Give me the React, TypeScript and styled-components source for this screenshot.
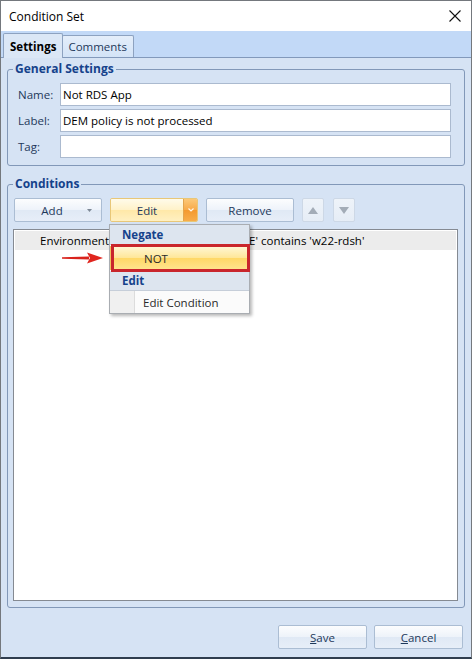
import React from 'react';
import styled, { createGlobalStyle, css } from 'styled-components';

const UI_FONT = `"Open Sans", "Noto Sans", "DejaVu Sans", sans-serif`;

const Global = createGlobalStyle`
  html, body { margin: 0; padding: 0; background: #ffffff; }
  body { font-family: ${UI_FONT}; }
  * { box-sizing: border-box; }
`;

const Window = styled.div`
  width: 472px;
  height: 659px;
  display: flex;
  flex-direction: column;
  border: 1px solid #74787d;
  border-bottom: 2px solid #2f3d4e;
  background: #ffffff;
  font-family: ${UI_FONT};
  font-size: 11.5px;
  color: #000;
  overflow: hidden;
`;

const TitleBar = styled.div`
  flex: none;
  height: 30px;
  display: flex;
  align-items: center;
  justify-content: space-between;
  padding: 0 10px 0 8px;
  background: #ffffff;
`;

const Title = styled.span`
  font-size: 12px;
  color: #000;
`;

const CloseButton = styled.button`
  width: 12px;
  height: 12px;
  padding: 0;
  border: none;
  background: transparent;
  display: flex;
`;

const TabStrip = styled.div`
  flex: none;
  height: 27px;
  display: flex;
  align-items: flex-end;
  padding-left: 2px;
  background: #c2d9f7;
  border-bottom: 1px solid #8299bb;
`;

const Tab = styled.div<{ $active?: boolean }>`
  display: flex;
  align-items: center;
  border: 1px solid #8da2c0;
  border-bottom: none;
  border-radius: 2px 2px 0 0;
  ${(p) =>
    p.$active
      ? css`
          height: 25px;
          padding: 0 6px;
          margin-bottom: -1px;
          background: #dbe7f6;
          font-weight: 700;
          color: #000;
        `
      : css`
          height: 22px;
          padding: 0 6px 0 5px;
          margin-left: -1px;
          background: linear-gradient(#e4eefa, #d3e3f7);
          color: #1e395b;
        `}
`;

const Panel = styled.div`
  flex: 1;
  min-height: 0;
  display: flex;
  flex-direction: column;
  padding: 3px 6px 0 6px;
  background: #d6e3f4;
`;

const Group = styled.fieldset<{ $grow?: boolean }>`
  margin: 0;
  min-width: 0;
  border: 1px solid #8298b8;
  border-radius: 3px;
  ${(p) =>
    p.$grow
      ? css`
          flex: 1;
          min-height: 0;
          display: flex;
          flex-direction: column;
          margin-top: 10px;
          padding: 6px 6px 6px 5px;
        `
      : css`
          padding: 6px 13px 7px 10px;
        `}
`;

const Legend = styled.legend<{ $shift: number }>`
  padding: 0 2px;
  margin-left: ${(p) => p.$shift}px;
  font-size: 12px;
  line-height: 16px;
  font-weight: 700;
  color: #15428b;
`;

const Fields = styled.div`
  display: flex;
  flex-direction: column;
  gap: 3px;
`;

const FieldRow = styled.div`
  display: flex;
  align-items: center;
  height: 23px;
`;

const FieldLabel = styled.label`
  flex: none;
  width: 42px;
  color: #1e395b;
`;

const TextInput = styled.input`
  flex: 1;
  min-width: 0;
  height: 23px;
  padding: 0 2px;
  border: 1px solid #abbacf;
  background: #ffffff;
  font: inherit;
  color: #000;
  outline: none;
`;

const ConditionsBody = styled.div`
  position: relative;
  flex: 1;
  min-height: 0;
  display: flex;
  flex-direction: column;
  gap: 7px;
`;

const Toolbar = styled.div`
  flex: none;
  display: flex;
  gap: 8px;
  padding-left: 1px;
`;

const buttonFace = css`
  height: 24px;
  border: 1px solid #abbdd3;
  border-radius: 2px;
  background: linear-gradient(#fcfdfe, #eef3fa 48%, #e0e9f5 52%, #e7eef8);
  color: #1e395b;
  font: inherit;
  padding: 0;
`;

const ToolButton = styled.button`
  ${buttonFace};
  width: 88px;
  display: flex;
  align-items: center;
  justify-content: center;
`;

const ButtonText = styled.span`
  flex: 1;
  text-align: center;
  padding-left: 2px;
`;

const Caret = styled.span`
  flex: none;
  width: 14px;
  display: flex;
  align-items: center;
  justify-content: flex-start;
`;

const SplitButton = styled.div`
  width: 88px;
  height: 24px;
  display: flex;
  border: 1px solid #e8c778;
  border-radius: 2px;
  overflow: hidden;
`;

const SplitMain = styled.button`
  flex: 1;
  border: none;
  padding: 0;
  background: linear-gradient(#fffbea, #fff2c9 48%, #ffe8a8 52%, #fff0c2);
  color: #1e395b;
  font: inherit;
`;

const SplitDrop = styled.button`
  flex: none;
  width: 14px;
  border: none;
  border-left: 1px solid #e3a54d;
  padding: 0;
  display: flex;
  align-items: center;
  justify-content: center;
  background: linear-gradient(#fcc877, #f8ab4b 48%, #f49a2f 52%, #f7ad4a);
`;

const ArrowButton = styled.button<{ $gapBefore?: number }>`
  width: 22px;
  height: 24px;
  padding: 0;
  border: 1px solid #cdd8e6;
  border-radius: 2px;
  background: linear-gradient(#eef3f9, #e6edf6);
  display: flex;
  align-items: center;
  justify-content: center;
  margin-left: ${(p) => p.$gapBefore ?? 0}px;
`;

const ListBox = styled.div`
  flex: 1;
  min-height: 0;
  border: 1px solid #858a92;
  background: #ffffff;
  padding: 1px;
`;

const ListRow = styled.div<{ $selected?: boolean }>`
  height: 19px;
  display: flex;
  align-items: center;
  padding-left: 25px;
  white-space: nowrap;
  color: #000;
  background: ${(p) => (p.$selected ? '#ececec' : 'transparent')};
`;

/* Drop-down menu opened from the Edit split button */
const PopupMenu = styled.div`
  position: absolute;
  left: 96px;
  top: 26px;
  width: 141px;
  display: flex;
  flex-direction: column;
  border: 1px solid #a9adb2;
  background: #fbfbfb;
  box-shadow: 2px 2px 3px rgba(0, 0, 0, 0.28);
  z-index: 2;
`;

const MenuHeader = styled.div`
  height: 20px;
  display: flex;
  align-items: center;
  padding-left: 12px;
  font-weight: 700;
  color: #15428b;
  background: #dde5ef;
  border-bottom: 1px solid #c6ced9;
`;

const MenuItem = styled.div<{ $hot?: boolean; $height: number }>`
  height: ${(p) => p.$height}px;
  display: flex;
  align-items: stretch;
  color: #2a2a2a;
  ${(p) =>
    p.$hot
      ? css`
          margin: 1px 0;
          background: linear-gradient(#fff6d2, #ffe79a 48%, #ffd867 52%, #ffe48c);
          border: 1px solid #f2c25e;
        `
      : css`
          background: #fbfbfb;
        `}
`;

const MenuGutter = styled.span<{ $visible?: boolean }>`
  flex: none;
  width: 25px;
  background: ${(p) => (p.$visible ? '#f0f0f0' : 'transparent')};
  border-right: 1px solid ${(p) => (p.$visible ? '#dcdcdc' : 'transparent')};
`;

const MenuText = styled.span`
  display: flex;
  align-items: center;
  padding-left: 8px;
`;

/* Red call-out marking the NOT entry */
const CallOutBox = styled.div`
  position: absolute;
  left: 98px;
  top: 46px;
  width: 139px;
  height: 28px;
  border: 3px solid #c9262c;
  z-index: 3;
  pointer-events: none;
`;

const CallOutArrow = styled.svg`
  position: absolute;
  left: 49px;
  top: 54px;
  z-index: 3;
`;

const Footer = styled.div`
  flex: none;
  display: flex;
  justify-content: flex-end;
  gap: 7px;
  padding: 17px 2px 8px 0;
`;

const DialogButton = styled.button`
  ${buttonFace};
  width: 89px;
`;

const Mnemonic = styled.span`
  text-decoration: underline;
`;

const TriUp = () => (
  <svg width="10" height="7" viewBox="0 0 10 7">
    <path d="M5 0 L10 7 L0 7 Z" fill="#a3acb7" />
  </svg>
);

const TriDown = () => (
  <svg width="10" height="7" viewBox="0 0 10 7">
    <path d="M0 0 L10 0 L5 7 Z" fill="#a3acb7" />
  </svg>
);

export default function App() {
  return (
    <>
      <Global />
      <Window>
        <TitleBar>
          <Title>Condition Set</Title>
          <CloseButton aria-label="Close">
            <svg width="12" height="12" viewBox="0 0 12 12">
              <path d="M0.5 0.5 L11.5 11.5 M11.5 0.5 L0.5 11.5" stroke="#111" strokeWidth="1.1" />
            </svg>
          </CloseButton>
        </TitleBar>

        <TabStrip>
          <Tab $active>Settings</Tab>
          <Tab>Comments</Tab>
        </TabStrip>

        <Panel>
          <Group>
            <Legend $shift={-5}>General Settings</Legend>
            <Fields>
              <FieldRow>
                <FieldLabel>Name:</FieldLabel>
                <TextInput defaultValue="Not RDS App" />
              </FieldRow>
              <FieldRow>
                <FieldLabel>Label:</FieldLabel>
                <TextInput defaultValue="DEM policy is not processed" />
              </FieldRow>
              <FieldRow>
                <FieldLabel>Tag:</FieldLabel>
                <TextInput defaultValue="" />
              </FieldRow>
            </Fields>
          </Group>

          <Group $grow>
            <Legend $shift={0}>Conditions</Legend>
            <ConditionsBody>
              <Toolbar>
                <ToolButton>
                  <ButtonText>Add</ButtonText>
                  <Caret>
                    <svg width="5" height="3" viewBox="0 0 5 3">
                      <path d="M0 0 L5 0 L2.5 3 Z" fill="#7d8896" />
                    </svg>
                  </Caret>
                </ToolButton>
                <SplitButton>
                  <SplitMain>Edit</SplitMain>
                  <SplitDrop>
                    <svg width="6" height="4" viewBox="0 0 6 4">
                      <path d="M0.5 0.5 L3 3 L5.5 0.5" stroke="#fff6e8" strokeWidth="1.2" fill="none" />
                    </svg>
                  </SplitDrop>
                </SplitButton>
                <ToolButton>Remove</ToolButton>
                <ArrowButton>
                  <TriUp />
                </ArrowButton>
                <ArrowButton $gapBefore={1}>
                  <TriDown />
                </ArrowButton>
              </Toolbar>

              <ListBox>
                <ListRow $selected>Environment Variable 'COMPUTERNAME' contains 'w22-rdsh'</ListRow>
              </ListBox>

              <PopupMenu>
                <MenuHeader>Negate</MenuHeader>
                <MenuItem $hot $height={24}>
                  <MenuGutter />
                  <MenuText>NOT</MenuText>
                </MenuItem>
                <MenuHeader>Edit</MenuHeader>
                <MenuItem $height={22}>
                  <MenuGutter $visible />
                  <MenuText>Edit Condition</MenuText>
                </MenuItem>
              </PopupMenu>

              <CallOutBox />
              <CallOutArrow width="42" height="12" viewBox="0 0 42 12">
                <path d="M0 5.2 L27 4.4 L27 7.6 L0 6.8 Z" fill="#d9231d" />
                <path d="M25 0.5 L41 6 L25 11.5 L28 6 Z" fill="#e0261f" />
              </CallOutArrow>
            </ConditionsBody>
          </Group>

          <Footer>
            <DialogButton>
              <Mnemonic>S</Mnemonic>ave
            </DialogButton>
            <DialogButton>
              <Mnemonic>C</Mnemonic>ancel
            </DialogButton>
          </Footer>
        </Panel>
      </Window>
    </>
  );
}
